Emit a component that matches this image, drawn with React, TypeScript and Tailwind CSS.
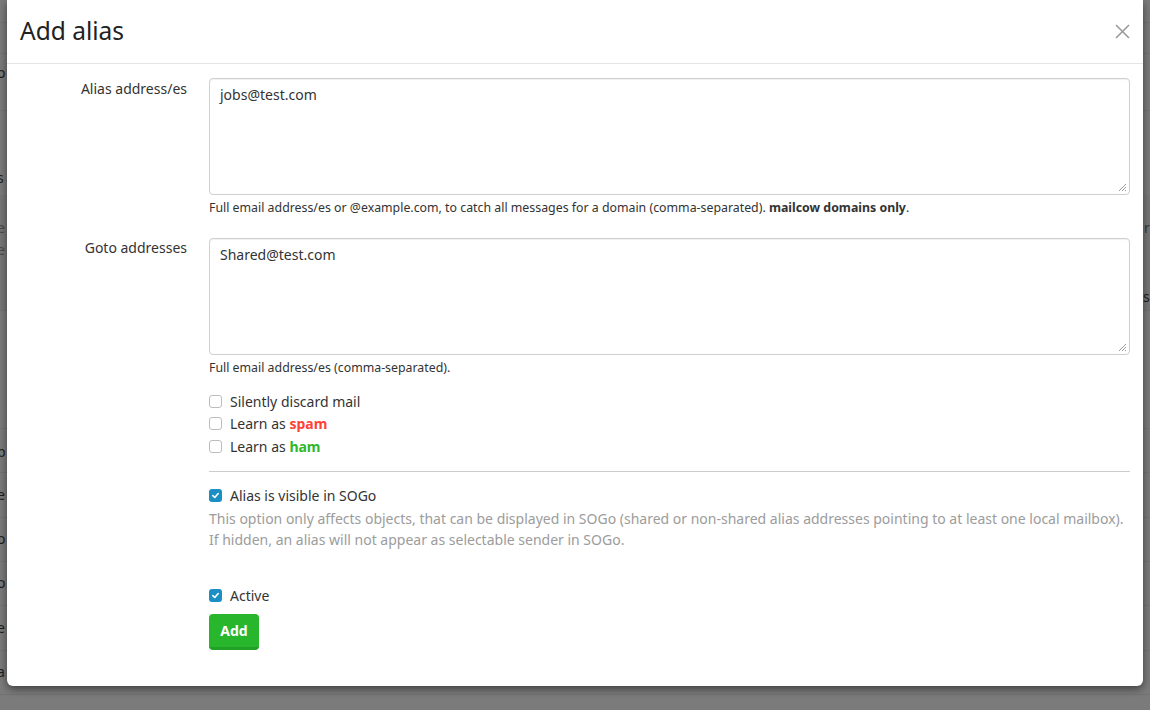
import React from 'react';

const font = { fontFamily: '"Noto Sans", "Open Sans", sans-serif' };

function Check({ checked = false }: { checked?: boolean }) {
    if (checked) {
        return (
            <span className="w-[13px] h-[13px] rounded-[3px] bg-[#1b8fc3] flex items-center justify-center flex-shrink-0">
                <svg width="9" height="9" viewBox="0 0 10 10" fill="none">
                    <path d="M2 5.2 L4.2 7.2 L8 2.8" stroke="#fff" strokeWidth="1.8" strokeLinecap="round" strokeLinejoin="round" />
                </svg>
            </span>
        );
    }
    return <span className="w-[13px] h-[13px] rounded-[3px] border border-[#bdbdbd] bg-white flex-shrink-0" />;
}

function CheckRow({ checked, children }: { checked?: boolean; children: React.ReactNode }) {
    return (
        <div className="flex items-center gap-[8px] h-[22px] text-[14px] text-[#333]">
            <Check checked={checked} />
            <span>{children}</span>
        </div>
    );
}

function Grip() {
    return (
        <svg className="absolute right-[2px] bottom-[2px]" width="9" height="9" viewBox="0 0 9 9">
            <path d="M8 1 L1 8 M8 4 L4 8 M8 7 L7 8" stroke="#999" strokeWidth="1" />
        </svg>
    );
}

function Backdrop() {
    // what shows of the page behind the dimmed overlay
    const leftBits = [
        { y: 63, t: 'o' }, { y: 168, t: 's' }, { y: 218, t: 'e', dim: true }, { y: 240, t: 'e', dim: true },
        { y: 400, t: 'l' }, { y: 442, t: 'p' }, { y: 485, t: 'e' }, { y: 529, t: 'o' },
        { y: 573, t: 'o' }, { y: 618, t: 'e' }, { y: 662, t: 'a' },
    ];
    const lines = [22, 53, 110, 195, 310, 428, 472, 517, 561, 605, 650, 694];
    return (
        <div className="absolute inset-0 bg-[#7b7b7b]">
            {lines.map((y) => (
                <div key={y} className="absolute left-0 right-0 h-px bg-[#737373]" style={{ top: y }} />
            ))}
            <div className="absolute left-0 top-[195px] w-full h-[115px] bg-[#777]" />
            {leftBits.map((b) => (
                <span
                    key={b.y}
                    className={`absolute left-[-3px] text-[14px] leading-[20px] ${b.dim ? 'text-[#4a4a4a]' : 'text-[#1e1e1e]'}`}
                    style={{ top: b.y }}
                >
                    {b.t}
                </span>
            ))}
            <span className="absolute left-[1144px] top-[218px] text-[14px] leading-[20px] text-[#3a3a3a]">r</span>
            <span className="absolute left-[1143px] top-[287px] text-[14px] leading-[20px] text-[#1e1e1e]">sh</span>
        </div>
    );
}

export default function App() {
    return (
        <div className="relative w-[1150px] h-[710px] overflow-hidden" style={font}>
            <Backdrop />
            <div className="relative z-10 ml-[7px] w-[1136px] h-[686px] bg-white rounded-b-[6px] shadow-[0_3px_9px_rgba(0,0,0,0.5)]">
                <div className="h-[64px] border-b border-[#e5e5e5] flex items-center justify-between pl-[13px] pr-[13px]">
                    <h4 className="text-[24.5px] leading-[30px] text-[#222] pb-[1px]">Add alias</h4>
                    <button aria-label="Close" className="w-[16px] h-[16px] flex items-center justify-center mb-[1px]">
                        <svg width="15" height="15" viewBox="0 0 15 15">
                            <path d="M1 1 L14 14 M14 1 L1 14" stroke="#9a9a9a" strokeWidth="1.6" />
                        </svg>
                    </button>
                </div>

                <div className="pt-[14px] pr-[13px]">
                    {/* alias addresses */}
                    <div className="flex">
                        <label className="w-[180px] text-right text-[14px] leading-[20px] text-[#333] pt-px">Alias address/es</label>
                        <div className="flex-1 ml-[22px]">
                            <div className="relative h-[117px] border border-[#cfcfcf] rounded-[4px] px-[10px] py-[6px] text-[14px] leading-[20px] text-[#333] shadow-[inset_0_1px_1px_rgba(0,0,0,0.06)]">
                                jobs@test.com
                                <Grip />
                            </div>
                            <p className="mt-[4px] text-[12.35px] leading-[17px] text-[#333]">
                                Full email address/es or @example.com, to catch all messages for a domain (comma-separated). <b>mailcow domains only</b>.
                            </p>
                        </div>
                    </div>

                    {/* goto */}
                    <div className="flex mt-[22px]">
                        <label className="w-[180px] text-right text-[14px] leading-[20px] text-[#333]">Goto addresses</label>
                        <div className="flex-1 ml-[22px]">
                            <div className="relative h-[117px] border border-[#cfcfcf] rounded-[4px] px-[10px] py-[6px] text-[14px] leading-[20px] text-[#333] shadow-[inset_0_1px_1px_rgba(0,0,0,0.06)]">
                                Shared@test.com
                                <Grip />
                            </div>
                            <p className="mt-[4px] text-[12.35px] leading-[17px] text-[#333]">Full email address/es (comma-separated).</p>

                            <div className="mt-[14px] flex flex-col gap-[0.5px]">
                                <CheckRow>Silently discard mail</CheckRow>
                                <CheckRow>
                                    Learn as <b className="text-[#ff4136]">spam</b>
                                </CheckRow>
                                <CheckRow>
                                    Learn as <b className="text-[#2eb82e]">ham</b>
                                </CheckRow>
                            </div>

                            <hr className="mt-[14px] border-0 h-px bg-[#cccccc]" />

                            <div className="mt-[12px]">
                                <CheckRow checked>Alias is visible in SOGo</CheckRow>
                                <p className="mt-[2px] text-[14px] leading-[21px] text-[#9c9c9c]">
                                    This option only affects objects, that can be displayed in SOGo (shared or non-shared alias addresses pointing to at least one local mailbox).
                                    <br />
                                    If hidden, an alias will not appear as selectable sender in SOGo.
                                </p>
                            </div>

                            <div className="mt-[34px]">
                                <CheckRow checked>Active</CheckRow>
                            </div>

                            <button className="mt-[8px] w-[50px] h-[36px] rounded-[4px] bg-[#28b62c] border-b-[3px] border-[#23a127] text-white text-[14px] font-bold">
                                Add
                            </button>
                        </div>
                    </div>
                </div>
            </div>
        </div>
    );
}
